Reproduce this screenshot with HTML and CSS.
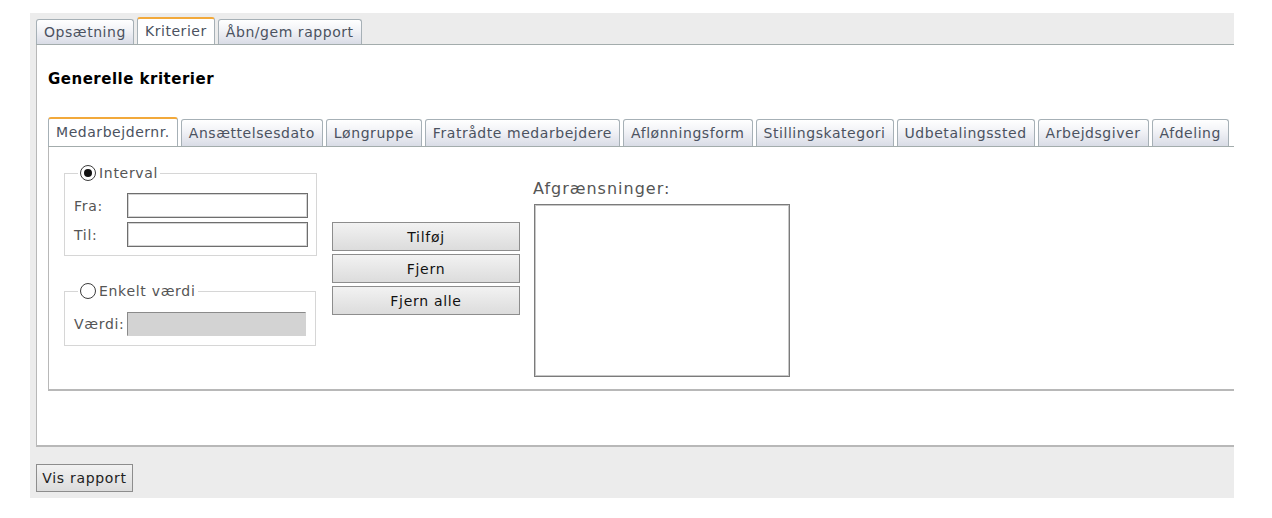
FILE: index.html
```html
<!DOCTYPE html>
<html lang="da">
<head>
<meta charset="utf-8">
<title>Kriterier</title>
<link rel="stylesheet" href="styles.css">
</head>
<body>
<div class="app">
  <div class="tabs top-tabs">
    <div class="tab">Opsætning</div>
    <div class="tab active">Kriterier</div>
    <div class="tab">Åbn/gem rapport</div>
  </div>
  <div class="panel">
    <h2 class="heading">Generelle kriterier</h2>
    <div class="tabs sub-tabs">
      <div class="tab active">Medarbejdernr.</div>
      <div class="tab">Ansættelsesdato</div>
      <div class="tab">Løngruppe</div>
      <div class="tab">Fratrådte medarbejdere</div>
      <div class="tab">Aflønningsform</div>
      <div class="tab">Stillingskategori</div>
      <div class="tab">Udbetalingssted</div>
      <div class="tab">Arbejdsgiver</div>
      <div class="tab">Afdeling</div>
    </div>
    <div class="subpanel">
      <div class="col-left">
        <fieldset class="group group-interval">
          <legend><span class="radio checked"></span>Interval</legend>
          <div class="row"><label>Fra:</label><span class="input"></span></div>
          <div class="row"><label>Til:</label><span class="input"></span></div>
        </fieldset>
        <fieldset class="group group-single">
          <legend><span class="radio"></span>Enkelt værdi</legend>
          <div class="row"><label>Værdi:</label><span class="input disabled"></span></div>
        </fieldset>
      </div>
      <div class="col-buttons">
        <button class="btn">Tilføj</button>
        <button class="btn">Fjern</button>
        <button class="btn">Fjern alle</button>
      </div>
      <div class="col-right">
        <div class="list-label">Afgrænsninger:</div>
        <div class="listbox"></div>
      </div>
    </div>
  </div>
  <div class="footer">
    <button class="btn btn-report">Vis rapport</button>
  </div>
</div>
</body>
</html>
```

FILE: styles.css
```css
html, body {
  margin: 0;
  padding: 0;
  background: #ffffff;
}

body {
  font-family: "DejaVu Sans", Verdana, sans-serif;
  font-size: 14px;
  letter-spacing: 0.7px;
  color: #333;
}

.app {
  margin: 13px 0 0 30px;
  width: 1204px;
  height: 485px;
  background: #ececec;
  padding: 6px 0 0 6px;
  box-sizing: border-box;
  display: flex;
  flex-direction: column;
}

.tabs {
  display: flex;
  gap: 3px;
  align-items: flex-end;
}

.tab {
  height: 24px;
  line-height: 24px;
  padding: 0 7px;
  font-size: 14px;
  letter-spacing: 0.55px;
  color: #4b5260;
  background: linear-gradient(#ffffff 0%, #f1f2f6 45%, #d9dce6 100%);
  border: 1px solid #a6b0b6;
  border-bottom: none;
  border-radius: 3px 3px 0 0;
  white-space: nowrap;
}

.tab.active {
  background: #ffffff;
  border-top: 2px solid #f2a93b;
  height: 25px;
  line-height: 24px;
}

.top-tabs {
  height: 25px;
  border-bottom: 1px solid #a3acac;
}

.panel {
  height: 402px;
  width: 1198px;
  box-sizing: border-box;
  background: #ffffff;
  border-left: 1px solid #b8b8b8;
  border-bottom: 2px solid #b8b8b8;
  padding: 0 0 0 11px;
}

.heading {
  margin: 25px 0 0 0;
  height: 20px;
  font-size: 15px;
  letter-spacing: 0.5px;
  font-weight: bold;
  color: #000;
}

.sub-tabs {
  margin-top: 28px;
  height: 28px;
  border-bottom: 1px solid #a3acac;
}

.sub-tabs .tab {
  height: 26px;
  line-height: 26px;
  padding: 0 7px;
}

.sub-tabs .tab.active {
  height: 27px;
  line-height: 26px;
}

.subpanel {
  height: 244px;
  box-sizing: border-box;
  border-left: 1px solid #b8b8b8;
  border-bottom: 2px solid #b8b8b8;
  display: flex;
  padding: 18px 0 0 15px;
}

.col-left {
  width: 252px;
  display: flex;
  flex-direction: column;
}

.group {
  margin: 0;
  border: 1px solid #d6d6d6;
  padding: 10px 8px 0 9px;
  box-sizing: border-box;
  width: 252px;
}

.group legend {
  padding: 0 2px 0 2px;
  margin-left: 4px;
  color: #555;
  font-size: 14px;
  display: flex;
  align-items: center;
  gap: 3px;
}

.group-interval {
  height: 91px;
}

.group-single {
  margin-top: 27px;
  height: 63px;
}

.radio {
  display: inline-block;
  width: 16px;
  height: 16px;
  border-radius: 50%;
  border: 1px solid #3c3c3c;
  box-sizing: border-box;
  background: #fff;
  position: relative;
}

.radio.checked::after {
  content: "";
  position: absolute;
  left: 3px;
  top: 3px;
  width: 8px;
  height: 8px;
  border-radius: 50%;
  background: #111;
}

.row {
  display: flex;
  align-items: center;
  height: 29px;
}

.row label {
  width: 53px;
  color: #555;
}

.input {
  width: 181px;
  height: 25px;
  box-sizing: border-box;
  border: 1px solid #6e6e6e;
  box-shadow: inset 0 0 0 1px #d4d4d4;
  background: #fff;
}

.input.disabled {
  background: #d3d3d3;
  border-color: #8a8a8a #d3d3d3 #d3d3d3 #8a8a8a;
  box-shadow: none;
  width: 179px;
  height: 24px;
}

.col-buttons {
  margin-left: 16px;
  margin-top: 57px;
  width: 188px;
  display: flex;
  flex-direction: column;
  gap: 3px;
}

.btn {
  font-family: "DejaVu Sans", Verdana, sans-serif;
  font-size: 14px;
  letter-spacing: 0.7px;
  color: #111;
  height: 29px;
  padding: 0;
  border: 1px solid #8d8d8d;
  background: linear-gradient(#f2f2f2, #dcdcdc);
  border-radius: 0;
}

.col-right {
  margin-left: 13px;
  margin-top: 14px;
  display: flex;
  flex-direction: column;
}

.list-label {
  font-size: 16px;
  letter-spacing: 1px;
  color: #555;
  height: 25px;
}

.listbox {
  width: 256px;
  height: 173px;
  margin-left: 1px;
  box-sizing: border-box;
  border: 1px solid #7b7b7b;
  box-shadow: inset 0 0 0 1px #c7c7c7;
  background: #fff;
}

.footer {
  padding-top: 17px;
}

.btn-report {
  width: 97px;
  height: 28px;
  color: #222;
}
```
